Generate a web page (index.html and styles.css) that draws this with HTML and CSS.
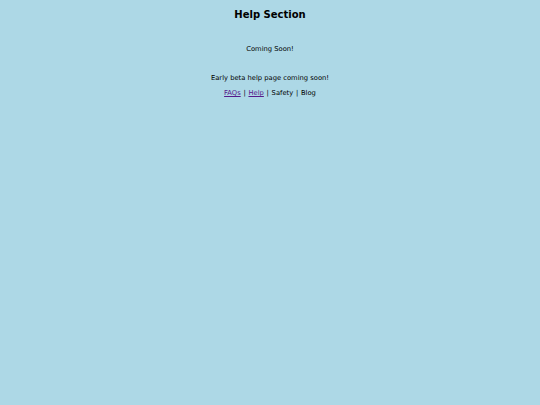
FILE: index.html
```html
<!DOCTYPE html>
<html>
<head>
<meta charset="utf-8">
<link rel="stylesheet" href="styles.css">
</head>
<body>
<h1 class="title">Help Section</h1>
<p class="soon">Coming Soon!</p>
<p class="beta">Early beta help page coming soon!</p>
<nav class="links"><a href="#">FAQs</a> | <a href="#">Help</a> | Safety | Blog</nav>
</body>
</html>
```
FILE: styles.css
```css
html, body {
  background: #add8e6;
}
body {
  margin: 0;
  padding: 9px 8px;
  font-family: "DejaVu Sans", sans-serif;
  font-size: 6.75px;
  line-height: 9px;
  color: #000;
  text-align: center;
}
.title {
  font-size: 10px;
  line-height: 12px;
  font-weight: bold;
  margin: 0;
}
.soon {
  margin: 24px 0 0;
}
.beta {
  margin: 20px 0 0;
}
.links {
  margin-top: 6px;
  word-spacing: 0.6px;
}
.links a {
  color: #551a8b;
}
```
